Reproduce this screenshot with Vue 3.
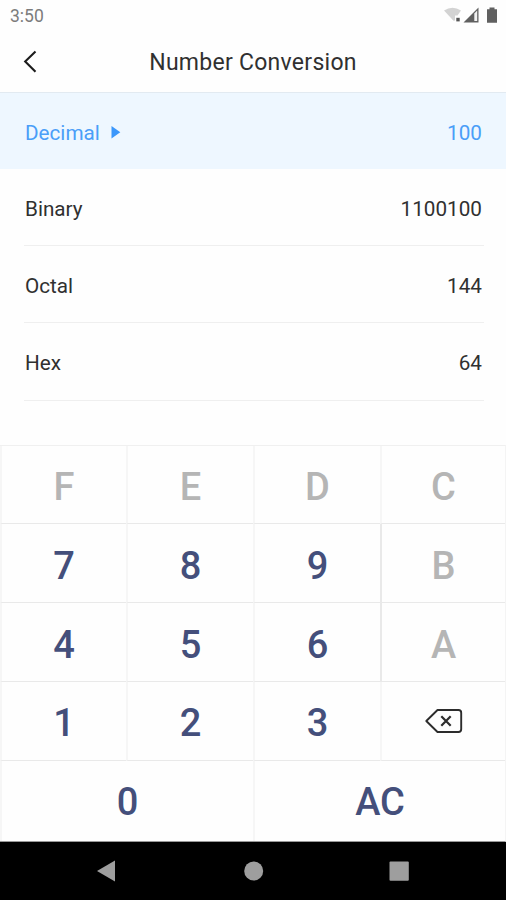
<script setup>
const rows = [
  { label: 'Decimal', value: '100', active: true },
  { label: 'Binary', value: '1100100' },
  { label: 'Octal', value: '144' },
  { label: 'Hex', value: '64' },
]
const off = ['F', 'E', 'D', 'C', 'B', 'A']
const keys = ['F', 'E', 'D', 'C', '7', '8', '9', 'B', '4', '5', '6', 'A', '1', '2', '3', 'del', '0', 'AC']
</script>

<template>
  <div class="screen">
    <div class="status">
      <span class="time">3:50</span>
      <svg class="indicators" width="56" height="20" viewBox="0 0 56 20">
        <path d="M1 4.500Q9.500 -1 18 4.500L14.500 9.500H12V14.500L10.500 14.800Z" fill="#d3d3d3" />
        <rect x="13.300" y="11.800" width="3.400" height="3.600" fill="#555" />
        <path d="M20.500 16.500L35.500 1.500V16.500Z" fill="#606060" />
        <path d="M31.300 7.500L34.200 4.500V15H31.300Z" fill="#f2f2f2" />
        <path d="M44 3.300H46.500V1.500H51.500V3.300H54V16.800H44Z" fill="#606060" />
      </svg>
    </div>
    <header class="header">
      <svg class="back" width="16" height="24" viewBox="0 0 16 24">
        <path d="M13.500 1.500L3.200 11.500L13.500 21.700" fill="none" stroke="#1c1c1c" stroke-width="2.100" />
      </svg>
      <h1 class="title">Number Conversion</h1>
    </header>
    <main class="list">
      <div v-for="r in rows" :key="r.label" class="row" :class="{ active: r.active }">
        <span class="label">{{ r.label }}</span>
        <svg v-if="r.active" class="arrow" width="10" height="14" viewBox="0 0 10 14">
          <path d="M0.500 0L9.300 6.300L0.500 12.600Z" fill="#3b97fb" />
        </svg>
        <span class="value">{{ r.value }}</span>
      </div>
    </main>
    <section class="keypad">
      <div
        v-for="k in keys"
        :key="k"
        class="key"
        :class="{
          off: off.includes(k),
          low: ['1', '2', '3'].includes(k),
          wide: k === '0' || k === 'AC',
          strong: k === 'B' || k === 'A',
          icon: k === 'del',
        }"
      >
        <svg v-if="k === 'del'" width="40" height="26" viewBox="0 0 40 26">
          <path d="M13.500 2H34.500Q37.200 2 37.200 4.700V21.300Q37.200 24 34.500 24H13.500L2.300 13Z" fill="none" stroke="#2c2c2c" stroke-width="1.900" stroke-linejoin="round" />
          <path d="M17.300 8.300L26.700 17.700M26.700 8.300L17.300 17.700" stroke="#2c2c2c" stroke-width="2.200" />
        </svg>
        <span v-else>{{ k }}</span>
      </div>
    </section>
    <nav class="nav">
      <svg width="506" height="58" viewBox="0 0 506 58">
        <path d="M97 29L115 18.500V39.500Z" fill="#9e9e9e" />
        <circle cx="253.700" cy="29" r="9.500" fill="#9e9e9e" />
        <rect x="389.500" y="19.500" width="19.300" height="19.300" rx="1" fill="#9e9e9e" />
      </svg>
    </nav>
  </div>
</template>

<style>
body {
  margin: 0;
  background: #fefefe;
}
</style>

<style scoped>
.screen {
  width: 506px;
  height: 900px;
  display: flex;
  flex-direction: column;
  background: #fefefe;
  font-family: Roboto, 'Liberation Sans', sans-serif;
  color: #303030;
  overflow: hidden;
}
.status {
  height: 32px;
  box-sizing: border-box;
  padding: 6px 7px 0 10px;
  display: flex;
  justify-content: space-between;
}
.time {
  font-size: 17.5px;
  line-height: 20px;
  color: #7c7c7c;
}
.header {
  height: 60px;
  display: grid;
  grid-template-columns: 60px 1fr 60px;
  align-items: center;
}
.back {
  margin-left: 22px;
}
.title {
  margin: 0;
  padding-top: 2px;
  font-size: 23px;
  line-height: 28px;
  font-weight: 400;
  text-align: center;
  letter-spacing: 0.27px;
  white-space: nowrap;
}
.list {
  height: 353px;
}
.row {
  height: 77px;
  box-sizing: border-box;
  margin: 0 22px 0 24px;
  padding: 3px 2px 0 1px;
  display: flex;
  align-items: center;
  border-bottom: 1px solid #efefef;
  font-size: 20.7px;
}
.row:last-child {
  height: 78px;
  padding-top: 2px;
}
.row.active {
  margin: 0;
  padding: 3px 24px 0 25px;
  color: #4a9ef8;
  background: #eef7ff;
  border-top: 1px solid #e2eaf1;
  border-bottom: 0;
}
.arrow {
  margin-left: 11px;
}
.value {
  margin-left: auto;
}
.keypad {
  height: 397px;
  box-sizing: border-box;
  display: grid;
  grid-template-columns: 126px 127px 127px 1fr;
  grid-template-rows: 78px 79px 79px 79px 1fr;
  border-top: 1px solid #f0f0f0;
  border-right: 1px solid #f4f4f4;
  border-bottom: 1px solid #999;
}
.key {
  box-sizing: border-box;
  padding-top: 5px;
  display: flex;
  align-items: center;
  justify-content: center;
  font-size: 38px;
  line-height: 44px;
  font-weight: 500;
  color: #444f7b;
  border-left: 2px solid #f6f6f6;
  border-bottom: 1px solid #e9e9e9;
}
.key.off {
  color: #b5b5b5;
}
.key.strong {
  border-left-color: #e9e9e9;
}
.key.low {
  padding-top: 3px;
}
.key.icon {
  padding: 0;
}
.key.wide {
  grid-column: span 2;
  padding-top: 1px;
  border-bottom: 0;
}
.nav {
  height: 58px;
  background: #000;
}
</style>
